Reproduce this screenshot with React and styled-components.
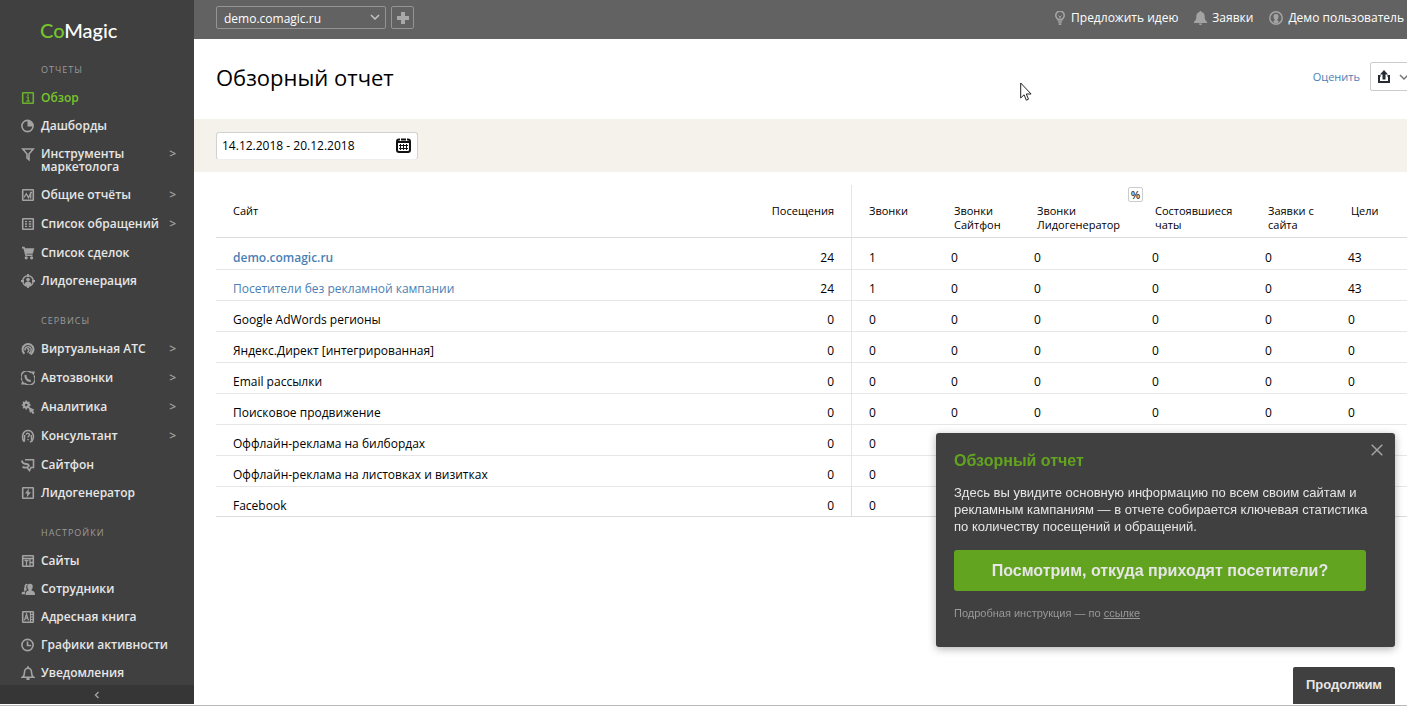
import { createGlobalStyle, styled } from 'styled-components'

const GlobalStyle = createGlobalStyle`
  * {
    box-sizing: border-box;
  }
  body {
    margin: 0;
    background-color: #fff;
    color: #000;
    font-family: 'Open Sans', 'Noto Sans', sans-serif;
    font-size: 12px;
  }
  button, input, select {
    font: inherit;
    color: inherit;
  }
  a {
    text-decoration: none;
  }
`

const Page = styled.div`
  display: flex;
  height: 100vh;
  padding-bottom: 1px;
  border-bottom: 1px solid #b9b9b9;
  overflow: hidden;
`

const Sidebar = styled.aside`
  display: flex;
  flex-direction: column;
  flex: 0 0 194px;
  background-color: #404040;
`

const Logo = styled.a`
  padding: 16px 0 0 40px;
  height: 44px;
  flex-shrink: 0;
  color: #fff;
  font-family: Lato, sans-serif;
  font-size: 20px;
  font-weight: 500;
  line-height: 28px;
  span {
    color: #76c52c;
  }
`

const Nav = styled.nav`
  flex: 1;
  min-height: 0;
  overflow: hidden;
`

const NavHeading = styled.h2`
  margin: 0;
  padding: 18px 0 7px 41px;
  color: #9b9b9b;
  font-size: 9px;
  font-weight: 400;
  line-height: 15px;
  letter-spacing: 1px;
  text-transform: uppercase;
`

const NavList = styled.ul`
  list-style: none;
  margin: 0;
  padding: 0;
`

const NavLink = styled.a`
  display: flex;
  align-items: flex-start;
  min-height: ${({ $nested }) => ($nested ? 29 : 28)}px;
  padding: 7px 18px 8px 21px;
  color: ${({ $active }) => ($active ? '#76c52c' : '#e6e6e6')};
  font-weight: 600;
  line-height: 13px;
  svg {
    flex-shrink: 0;
    width: 14px;
    height: 14px;
    margin: 0 6px -1px 0;
    color: ${({ $active }) => ($active ? '#6bb02c' : '#a3a3a3')};
  }
`

const NavLabel = styled.span`
  flex: 1;
  white-space: pre-line;
`

const NavArrow = styled.span`
  color: #a3a3a3;
`

const Collapse = styled.button`
  display: flex;
  align-items: center;
  justify-content: center;
  flex: 0 0 19px;
  padding: 0;
  border: none;
  background-color: #363636;
  color: #a3a3a3;
  cursor: pointer;
`

const Main = styled.main`
  flex: 1;
  min-width: 0;
  overflow: hidden;
`

const TopBar = styled.header`
  display: flex;
  align-items: center;
  height: 39px;
  padding: 0 3px 4px 22px;
  background-color: #626262;
  color: #fff;
`

const SiteSelect = styled.div`
  position: relative;
  width: 170px;
  margin-right: 5px;
  select {
    display: block;
    width: 100%;
    height: 23px;
    padding: 1px 24px 0 7px;
    border: 1px solid #949494;
    border-radius: 2px;
    background: transparent;
    appearance: none;
  }
  option {
    color: #000;
  }
  svg {
    position: absolute;
    right: 6px;
    top: 8px;
    pointer-events: none;
  }
`

const AddButton = styled.button`
  display: flex;
  align-items: center;
  justify-content: center;
  width: 23px;
  height: 23px;
  padding: 0;
  border: 1px solid #949494;
  border-radius: 2px;
  background: transparent;
  color: #a8a8a8;
`

const UserLinks = styled.div`
  display: flex;
  gap: 16px;
  margin-left: auto;
`

const UserLink = styled.a`
  display: flex;
  align-items: center;
  gap: 5px;
  color: #fff;
  font-weight: 500;
  white-space: nowrap;
  svg {
    color: #a3a3a3;
  }
`

const TitleRow = styled.div`
  display: flex;
  align-items: center;
  height: 80px;
  padding: 0 0 5px 22px;
`

const Title = styled.h1`
  flex: 1;
  margin: 0;
  font-size: 22px;
  font-weight: 500;
`

const RateLink = styled.a`
  margin-right: 10px;
  color: #4a7fb5;
  font-size: 11px;
`

const ExportButton = styled.button`
  display: flex;
  align-items: center;
  gap: 9px;
  height: 29px;
  margin-right: -11px;
  padding: 0 8px 0 7px;
  border: 1px solid #ccc;
  border-radius: 2px;
  background-color: #fff;
  color: #262b33;
`

const FilterBar = styled.div`
  height: 53px;
  padding: 13px 22px 12px;
  background-color: #f5f2eb;
`

const DateField = styled.label`
  display: flex;
  align-items: center;
  width: 202px;
  height: 28px;
  padding: 0 6px 1px 5px;
  border: 1px solid #d2d2d2;
  border-bottom-color: #eee;
  border-radius: 3px;
  background-color: #fff;
  input {
    flex: 1;
    min-width: 0;
    padding: 0;
    border: none;
    outline: none;
    background: transparent;
  }
`

const Report = styled.table`
  width: calc(100% - 22px);
  margin: 13px 0 0 22px;
  border-spacing: 0;
  table-layout: fixed;
  tbody tr:first-child td {
    padding-top: 12px;
  }
  tbody tr:last-child td {
    padding-bottom: 2px;
    border-color: #dcdcdc;
  }
`

const Col = styled.col`
  width: ${({ $width }) => $width}px;
`

const HeadCell = styled.th`
  position: relative;
  height: 53px;
  padding: 19px 0 0 ${({ $divided }) => ($divided ? 17 : 20)}px;
  border-bottom: 1px solid #dcdcdc;
  border-left: ${({ $divided }) => ($divided ? '1px solid #e6e6e6' : 'none')};
  font-size: 11px;
  font-weight: 400;
  line-height: 14px;
  text-align: left;
  vertical-align: top;
  white-space: pre-line;
  &:first-child {
    padding-left: 17px;
  }
  &:nth-child(2) {
    padding: 19px 17px 0 0;
    text-align: right;
  }
`

const Cell = styled.td`
  padding: 11px 17px 3px;
  border-bottom: 1px solid #e6e6e6;
  border-left: ${({ $divided }) => ($divided ? '1px solid #e6e6e6' : 'none')};
  line-height: 16px;
  text-align: ${({ $right }) => ($right ? 'right' : 'left')};
`

const SiteLink = styled.a`
  color: #4a7fb5;
  font-weight: ${({ $strong }) => ($strong ? 600 : 400)};
`

const PercentButton = styled.button`
  position: absolute;
  top: 2px;
  right: -8px;
  z-index: 1;
  width: 15px;
  height: 15px;
  padding: 0;
  border: 1px solid #ccc;
  border-radius: 2px;
  background-color: #fff;
  color: #333;
  font-size: 11px;
  font-weight: 600;
  line-height: 13px;
`

const Tour = styled.section`
  position: fixed;
  right: 12px;
  bottom: 59px;
  width: 459px;
  height: 214px;
  padding: 18px;
  border-radius: 3px;
  background-color: #404040;
  box-shadow: 0 2px 8px rgba(0, 0, 0, 0.3);
  color: #e6e6e6;
  font-family: 'Liberation Sans', Arial, sans-serif;
  h2 {
    margin: 0 0 14px;
    color: #62a420;
    font-size: 16px;
    line-height: 19px;
  }
  p {
    margin: 0;
    font-size: 13px;
    line-height: 17px;
  }
`

const TourClose = styled.button`
  position: absolute;
  top: 11px;
  right: 12px;
  display: flex;
  padding: 0;
  border: none;
  background: transparent;
  color: #a3a3a3;
`

const TourAction = styled.button`
  display: block;
  width: calc(100% - 11px);
  height: 41px;
  margin: 15px 0;
  border: none;
  border-radius: 3px;
  background-color: #62a420;
  color: #e6e6e6;
  font-size: 16px;
  font-weight: 700;
`

const TourNote = styled.small`
  color: #999;
  font-size: 11px;
  line-height: 14px;
  a {
    color: inherit;
    text-decoration: underline;
  }
`

const ContinueButton = styled.button`
  position: fixed;
  right: 12px;
  bottom: 2px;
  width: 102px;
  height: 37px;
  padding: 0 0 2px;
  border: none;
  border-radius: 2px 2px 0 0;
  background-color: #404040;
  color: #e6e6e6;
  font-family: 'Liberation Sans', Arial, sans-serif;
  font-size: 13px;
  font-weight: 700;
`

const Pointer = styled.svg`
  position: fixed;
  left: 1020px;
  top: 82px;
  pointer-events: none;
`

const icons = {
  info: (
    <>
      <rect x='1.7' y='1.7' width='10.6' height='10.6' rx='0.5' />
      <path d='M5.500 6.200h1.700v3.600M5.200 10.200h3.600M6.200 4h1.600' strokeWidth='1.300' />
    </>
  ),
  pie: (
    <>
      <circle cx='6.5' cy='7' r='5.6' />
      <path d='M6.500 1.500V7.500h5.700A5.500 5.500 0 0 0 6.500 1.500z' fill='currentColor' stroke='none' />
    </>
  ),
  funnel: <path d='M1.800 2h10.400L8 7v5.700L6 10.800V7z' />,
  chart: (
    <>
      <rect x='1.7' y='1.7' width='10.6' height='10.6' rx='0.5' />
      <path d='M3 9.500l2.300-3.800 2.200 4L9.700 5v5.500M9 4.500h2' strokeWidth='1.300' />
    </>
  ),
  list: (
    <>
      <rect x='1.7' y='1.7' width='10.6' height='10.6' rx='0.5' />
      <path d='M4 4.700h2M7.700 4.700h2.600M4 7h2M7.700 7h2.600M4 9.300h2M7.700 9.300h2.600' strokeWidth='1.300' />
    </>
  ),
  cart: (
    <>
      <path d='M3.500 2.500H13l-1.400 5H5z' fill='currentColor' strokeWidth='0.5' />
      <path d='M1 1.600h2L5 9.200h6.500' />
      <circle cx='5.2' cy='11.8' r='0.8' fill='currentColor' />
      <circle cx='10.6' cy='11.8' r='0.8' fill='currentColor' />
    </>
  ),
  target: (
    <>
      <circle cx='7' cy='7' r='5.3' strokeWidth='1.4' />
      <path d='M7 0v3M7 11v3M0 7h3M11 7h3' strokeWidth='1.8' />
      <circle cx='7' cy='5.6' r='1.8' fill='currentColor' stroke='none' />
      <path d='M3.600 10.600c0-4 6.800-4 6.800 0L7 13z' fill='currentColor' stroke='none' />
    </>
  ),
  pbx: (
    <>
      <path d='M3.400 11.700A5.500 5.500 0 1 1 12.500 7c0 2-1 4-3 5.300' strokeWidth='2' />
      <path d='M4 8.500A3.200 3.200 0 0 1 10 6.500c.6 2-.4 4-2 5M6 7.300c1-1.200 2.300-.2 1.800 1.200-.2.900-.8 1.600-1.400 2' strokeWidth='1.400' />
    </>
  ),
  autocall: (
    <>
      <path d='M1 9.300A6 6 0 0 1 10.500 2M13 4.700A6 6 0 0 1 3.500 12' strokeWidth='1.400' />
      <path d='M9.600.4l4.200.2-1 4zM4.400 13.600l-4.200-.2 1-4z' fill='currentColor' stroke='none' />
      <path d='M4.600 4.100c-.8 3.100 2 6.100 5.100 5.700' strokeWidth='2.200' />
    </>
  ),
  analytics: (
    <>
      <circle cx='5.2' cy='5' r='2.400' strokeWidth='2.300' />
      <path d='M5.200.6v1.700M5.200 7.700v1.700M.800 5h1.700M8 5h1.700M2.100 1.900l1.100 1.100M7.200 7l1 1M2.100 8.100l1.100-1.100M7.200 3l1.100-1.100' />
      <path d='M7.500 6.800l6 3-1.500.9 1.400 2.400-1.700 1-1.400-2.400-1.300 1.200z' fill='currentColor' stroke='none' />
    </>
  ),
  consultant: (
    <>
      <path d='M3 12.500C.300 8.500 1.500 1.500 7 1.500s6.700 7 4 10.500l-2 1' strokeWidth='1.600' />
      <path d='M3.400 12.800L3.700 6M10.600 11.500L10.300 6M5.200 5.700c.2-1.900 3.500-1.800 3.300.1C8.400 7 7 7.100 7 8.600M7 10v1.300' strokeWidth='1.400' />
    </>
  ),
  sitephone: (
    <>
      <path d='M4 1.800h8.500v7.700H10l-1.500 3-2.200-2.600' />
      <path d='M1 2.500c0 2.500 2 3.300 4 3.500s3.500.7 2.500 2.500C6.700 9.600 3.500 9.600 1.500 9' strokeWidth='1.900' />
    </>
  ),
  leadgen: (
    <>
      <rect x='1.7' y='1.7' width='10.6' height='10.6' rx='0.5' />
      <path d='M7.900 2.600L4 7.500h2.300L5.700 11.600l4.300-5.300H7.500z' fill='currentColor' stroke='none' />
    </>
  ),
  sites: (
    <>
      <rect x='1.7' y='1.7' width='10.6' height='10.6' rx='0.5' />
      <path d='M1.500 4.500h11M3.500 6.500h4M5.500 6.500v6M9 5v7.500M9 8.500h3.500' strokeWidth='1.300' />
    </>
  ),
  people: (
    <>
      <path d='M3.800 9.500C2.600 8 2.800 6 3.600 5 2.800 2 6 .8 7 2.300 4.700 3.400 5 6 6 7.600L4 9.500v2.800H.5c0-2.300 1-2.700 3.300-2.800z' fill='currentColor' stroke='none' />
      <path d='M9 1.800c2.300 0 3 1.500 2.700 3.500-.1 1.200-.6 2-1.200 2.600v.7c2.200.6 3.500 1.100 3.500 4.400H4.600c0-3.300 1-3.800 3-4.400v-.7c-.6-.6-1.100-1.400-1.200-2.600C6.100 3.300 6.800 1.800 9 1.800z' fill='currentColor' stroke='none' />
    </>
  ),
  book: (
    <>
      <rect x='1.7' y='1.7' width='10.6' height='10.6' rx='0.5' />
      <path d='M3.500 10.500L5.500 4l2 6.500M4.200 8.200h2.600M9.500 1.500v11M9.500 4.500H12M9.500 7H12M9.500 9.500H12' strokeWidth='1.200' />
    </>
  ),
  clock: (
    <>
      <circle cx='6.5' cy='7' r='5.6' />
      <path d='M6.500 3.500v4h3.700' />
    </>
  ),
  bell: (
    <>
      <path d='M1.500 11.200h11c-1.400-1-2-1.800-2-5C10.500 3.500 9 2.300 7 2.300S3.500 3.500 3.500 6.200c0 3.200-.6 4-2 5z' />
      <path d='M7 .3v1.700M5.500 13h3' strokeWidth='1.800' />
    </>
  ),
}

const menu = [
  {
    title: 'Отчеты',
    items: [
      { icon: 'info', label: 'Обзор', active: true },
      { icon: 'pie', label: 'Дашборды' },
      { icon: 'funnel', label: 'Инструменты\nмаркетолога', nested: true },
      { icon: 'chart', label: 'Общие отчёты', nested: true },
      { icon: 'list', label: 'Список обращений', nested: true },
      { icon: 'cart', label: 'Список сделок' },
      { icon: 'target', label: 'Лидогенерация' },
    ],
  },
  {
    title: 'Сервисы',
    items: [
      { icon: 'pbx', label: 'Виртуальная АТС', nested: true },
      { icon: 'autocall', label: 'Автозвонки', nested: true },
      { icon: 'analytics', label: 'Аналитика', nested: true },
      { icon: 'consultant', label: 'Консультант', nested: true },
      { icon: 'sitephone', label: 'Сайтфон' },
      { icon: 'leadgen', label: 'Лидогенератор' },
    ],
  },
  {
    title: 'Настройки',
    items: [
      { icon: 'sites', label: 'Сайты' },
      { icon: 'people', label: 'Сотрудники' },
      { icon: 'book', label: 'Адресная книга' },
      { icon: 'clock', label: 'Графики активности' },
      { icon: 'bell', label: 'Уведомления' },
    ],
  },
]

const columns = [
  { title: 'Звонки', width: 83 },
  { title: 'Звонки\nСайтфон', width: 83 },
  { title: 'Звонки\nЛидогенератор', width: 118, percent: true },
  { title: 'Состоявшиеся\nчаты', width: 113 },
  { title: 'Заявки с\nсайта', width: 83 },
  { title: 'Цели', width: 76 },
]

const rows = [
  { name: 'demo.comagic.ru', link: true, strong: true, visits: 24, values: [1, 0, 0, 0, 0, 43] },
  { name: 'Посетители без рекламной кампании', link: true, visits: 24, values: [1, 0, 0, 0, 0, 43] },
  { name: 'Google AdWords регионы', visits: 0, values: [0, 0, 0, 0, 0, 0] },
  { name: 'Яндекс.Директ [интегрированная]', visits: 0, values: [0, 0, 0, 0, 0, 0] },
  { name: 'Email рассылки', visits: 0, values: [0, 0, 0, 0, 0, 0] },
  { name: 'Поисковое продвижение', visits: 0, values: [0, 0, 0, 0, 0, 0] },
  { name: 'Оффлайн-реклама на билбордах', visits: 0, values: [0, 0, 0, 0, 0, 0] },
  { name: 'Оффлайн-реклама на листовках и визитках', visits: 0, values: [0, 0, 0, 0, 0, 0] },
  { name: 'Facebook', visits: 0, values: [0, 0, 0, 0, 0, 0] },
]

const Icon = ({ name }) => (
  <svg viewBox='0 0 14 14' fill='none' stroke='currentColor' strokeWidth='1.6' aria-hidden='true'>
    {icons[name]}
  </svg>
)

const Chevron = ({ color }) => (
  <svg width='10' height='6' viewBox='0 0 10 6' fill='none' stroke={color} strokeWidth='1.5' aria-hidden='true'>
    <path d='M1 1l4 4 4-4' />
  </svg>
)

const SideMenu = () => (
  <Sidebar>
    <Logo href='#'>
      <span>Co</span>Magic
    </Logo>
    <Nav>
      {menu.map(({ title, items }) => (
        <div key={title}>
          <NavHeading>{title}</NavHeading>
          <NavList>
            {items.map(({ icon, label, active, nested }) => (
              <li key={label}>
                <NavLink href='#' $active={active} $nested={nested}>
                  <Icon name={icon} />
                  <NavLabel>{label}</NavLabel>
                  {nested && <NavArrow>&gt;</NavArrow>}
                </NavLink>
              </li>
            ))}
          </NavList>
        </div>
      ))}
    </Nav>
    <Collapse aria-label='Свернуть меню'>
      <svg width='6' height='8' viewBox='0 0 6 8' fill='none' stroke='currentColor' strokeWidth='1.4'>
        <path d='M4.500 1l-3 3 3 3' />
      </svg>
    </Collapse>
  </Sidebar>
)

const Header = () => (
  <TopBar>
    <SiteSelect>
      <select aria-label='Сайт'>
        <option>demo.comagic.ru</option>
      </select>
      <Chevron color='#c4c4c4' />
    </SiteSelect>
    <AddButton aria-label='Добавить сайт'>
      <svg width='12' height='12' viewBox='0 0 12 12' fill='currentColor'>
        <path d='M4 0h4v4h4v4H8v4H4V8H0V4h4z' />
      </svg>
    </AddButton>
    <UserLinks>
      <UserLink href='#'>
        <svg width='12' height='14' viewBox='0 0 12 14' fill='none' stroke='currentColor' strokeWidth='1.6'>
          <path d='M4.200 9V8.200A4.200 4.200 0 1 1 7.800 8.200V9z' />
          <path d='M6 9V6L4.500 4.500M6 6l1.500-1.500' strokeWidth='1' />
          <path d='M4 11h4M4.700 13.100h2.600' />
        </svg>
        Предложить идею
      </UserLink>
      <UserLink href='#'>
        <svg width='13' height='14' viewBox='0 0 13 14' fill='currentColor'>
          <path d='M6.500 0c.7 0 1 .5 1 1.100C9.600 1.600 10.700 3.200 10.700 5.500c0 3 .6 4 2.300 5.200V12H0v-1.300c1.700-1.200 2.300-2.200 2.300-5.200 0-2.300 1.100-3.900 3.200-4.400 0-.6.300-1.100 1-1.100zM5 12.500h3c0 2-3 2-3 0z' />
        </svg>
        Заявки
      </UserLink>
      <UserLink href='#'>
        <svg width='14' height='14' viewBox='0 0 14 14' fill='none' stroke='currentColor' strokeWidth='1.500'>
          <circle cx='7' cy='7' r='6.200' />
          <path d='M7 3c2 0 2.700 1.300 2.500 3-.1 1.100-.5 1.900-1.100 2.400v1l1.400.8C9.500 11.500 8.500 12.300 7 12.300S4.500 11.500 4.200 10.200l1.400-.8v-1C5 7.900 4.600 7.100 4.500 6 4.300 4.300 5 3 7 3z' fill='currentColor' stroke='none' />
        </svg>
        Демо пользователь
      </UserLink>
    </UserLinks>
  </TopBar>
)

const ReportTable = () => (
  <Report>
    <colgroup>
      <col />
      <Col $width={96} />
      {columns.map(({ title, width }) => (
        <Col key={title} $width={width} />
      ))}
    </colgroup>
    <thead>
      <tr>
        <HeadCell>Сайт</HeadCell>
        <HeadCell>Посещения</HeadCell>
        {columns.map(({ title, percent }, index) => (
          <HeadCell key={title} $divided={index === 0}>
            {title}
            {percent && <PercentButton>%</PercentButton>}
          </HeadCell>
        ))}
      </tr>
    </thead>
    <tbody>
      {rows.map(({ name, link, strong, visits, values }) => (
        <tr key={name}>
          <Cell>
            {link ? (
              <SiteLink href='#' $strong={strong}>
                {name}
              </SiteLink>
            ) : (
              name
            )}
          </Cell>
          <Cell $right>{visits}</Cell>
          {values.map((value, index) => (
            <Cell key={index} $divided={index === 0}>
              {value}
            </Cell>
          ))}
        </tr>
      ))}
    </tbody>
  </Report>
)

const App = () => {
  return (
    <>
      <GlobalStyle />
      <Page>
        <SideMenu />
        <Main>
          <Header />
          <TitleRow>
            <Title>Обзорный отчет</Title>
            <RateLink href='#'>Оценить</RateLink>
            <ExportButton aria-label='Экспорт'>
              <svg width='12' height='13' viewBox='0 0 12 13' fill='none' stroke='currentColor' strokeWidth='2'>
                <path d='M2.500 6H1v6h10V6H9.500' />
                <path d='M6 3v6.500' strokeWidth='3' />
                <path d='M6 0l4 4.500H2z' fill='currentColor' stroke='none' />
              </svg>
              <Chevron color='#777' />
            </ExportButton>
          </TitleRow>
          <FilterBar>
            <DateField>
              <input type='text' aria-label='Период' defaultValue='14.12.2018 - 20.12.2018' />
              <svg width='15' height='15' viewBox='0 0 15 15' fill='none' stroke='#111' aria-hidden='true'>
                <rect x='1' y='1.500' width='13' height='12.500' rx='2' strokeWidth='2' />
                <path d='M1 4h13' strokeWidth='2' />
                <path d='M4.500 0v3M10.500 0v3' stroke='#fff' strokeWidth='1' />
                <path d='M3 7.500h9M3 10.500h9M4.500 6v6M7.500 6v6M10.500 6v6' />
              </svg>
            </DateField>
          </FilterBar>
          <ReportTable />
        </Main>
      </Page>
      <Tour>
        <TourClose aria-label='Закрыть'>
          <svg width='12' height='12' viewBox='0 0 12 12' fill='none' stroke='currentColor' strokeWidth='1.500'>
            <path d='M.7.7l10.600 10.600M11.300.7L.7 11.300' />
          </svg>
        </TourClose>
        <h2>Обзорный отчет</h2>
        <p>
          Здесь вы увидите основную информацию по всем своим сайтам и рекламным кампаниям — в отчете собирается
          ключевая статистика по количеству посещений и обращений.
        </p>
        <TourAction>Посмотрим, откуда приходят посетители?</TourAction>
        <TourNote>
          Подробная инструкция — по <a href='#'>ссылке</a>
        </TourNote>
      </Tour>
      <ContinueButton>Продолжим</ContinueButton>
      <Pointer width='13' height='20' viewBox='0 0 13 20' fill='#fff' stroke='#222' aria-hidden='true'>
        <path d='M.700 1v15l3.400-3.200 2.200 5.400 2.200-1-2.200-5.200h4.800z' />
      </Pointer>
    </>
  )
}

export default App
